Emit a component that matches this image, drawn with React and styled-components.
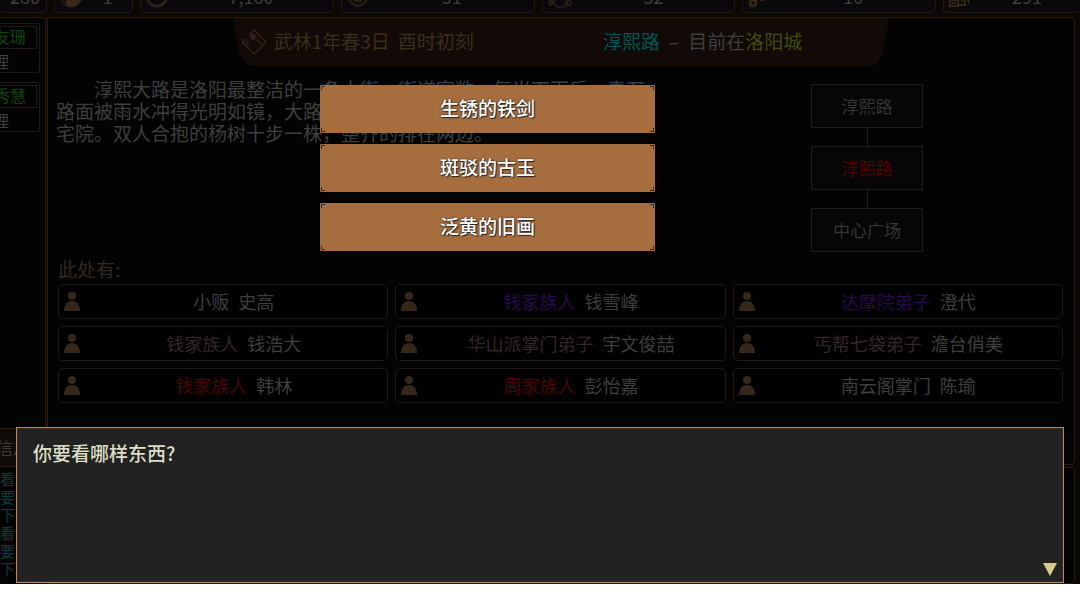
import React from 'react'
import styled, { createGlobalStyle } from 'styled-components'

const GlobalStyle = createGlobalStyle`
  * {
    box-sizing: border-box;
  }
  body {
    margin: 0;
    background: #ffffff;
    font-family: "Noto Sans CJK SC", sans-serif;
  }
  button {
    font-family: inherit;
    margin: 0;
    padding: 0;
    cursor: pointer;
  }
`;

const Stage = styled.div`
  position: relative;
  overflow: hidden;
  background: #0a0705;
  color: #3e3e3e;
`;

const StatBar = styled.header`
  display: grid;
  grid-template-columns: 47px 79px repeat(4, 194fr) 137fr;
  gap: 7px;
  align-content: end;
  height: 13px;
  overflow: hidden;
`;

const Stat = styled.div`
  display: flex;
  align-items: center;
  height: 34px;
  padding-left: 4px;
  background: #0a080a;
  border: 1px solid #21170d;
  border-left-width: ${(props) => (props.$cut ? '0' : '1px')};
  border-right-width: ${(props) => (props.$open ? '0' : '1px')};
  border-radius: 4px;
  font-size: 18px;
  line-height: 20px;
`;

const StatValue = styled.span`
  flex: 1;
  text-align: center;
`;

const Columns = styled.div`
  display: grid;
  grid-template-columns: 46px 1fr;
  column-gap: 1px;
  padding: 4px 5px 0 0;
`;

const Side = styled.aside`
  display: flex;
  flex-direction: column;
  overflow: hidden;
`;

const SideList = styled.div`
  display: flex;
  flex-direction: column;
  gap: 9px;
  min-height: 411px;
  padding: 5px 5px 0 0;
  background: #030303;
  border: solid #2a1c0f;
  border-width: 1px 1px 0 0;
  border-radius: 0 4px 0 0;
`;

const SideCard = styled.div`
  height: 50px;
  padding: 2px 2px 0 0;
  border: solid #1c1a18;
  border-width: 1px 1px 1px 0;
  border-radius: 0 3px 3px 0;
`;

const SideName = styled.div`
  display: flex;
  justify-content: flex-end;
  padding: 0 10px 2px 0;
  border: solid #221a12;
  border-width: 1px 1px 1px 0;
  font-size: 16px;
  line-height: 19px;
  white-space: nowrap;
  color: #14430a;
`;

const SideRole = styled.div`
  display: flex;
  justify-content: flex-end;
  padding-right: 28px;
  font-size: 16px;
  line-height: 24px;
  white-space: nowrap;
`;

const SideTab = styled.div`
  display: flex;
  height: 39px;
  align-items: center;
  background: #0f0b09;
  border: solid #2a1a10;
  border-width: 1px 0;
  font-size: 17px;
  text-indent: -4px;
  white-space: nowrap;
`;

const Log = styled.div`
  padding: 3px 0 6px;
  background: #030303;
  color: #023c3e;
  font-size: 15px;
  line-height: 18px;
`;

const Main = styled.main`
  display: flex;
  flex-direction: column;
  gap: 2px;
`;

const Panel = styled.section`
  min-height: 448px;
  background: #030303;
  border: 1px solid #2a1c0f;
  border-radius: 0 4px 4px 0;
`;

const LowerPanel = styled.section`
  flex: 1;
  background: #030303;
  border: 1px solid #2a1a12;
  border-radius: 0 4px 4px 0;
`;

const Banner = styled.div`
  display: flex;
  align-items: center;
  width: 64%;
  height: 48px;
  margin: 0 auto;
  padding: 0 87px 0 8px;
  background: #120a07;
  clip-path: polygon(0 0, 100% 0, 99% 75%, 98% 97%, 97% 100%, 3% 100%, 2% 97%, 1% 75%);
  font-size: 19px;
  white-space: nowrap;
`;

const GameDate = styled.div`
  display: flex;
  gap: 8px;
  margin-left: 7px;
  padding-bottom: 4px;
  color: #3b2e1a;
`;

const Whereabouts = styled.div`
  display: flex;
  gap: 9px;
  margin-left: auto;
  padding-bottom: 4px;
`;

const RoomName = styled.span`
  color: #015456;
`;

const CityName = styled.span`
  color: #434c04;
`;

const Scene = styled.div`
  display: flex;
  padding-top: 12px;
`;

const Description = styled.p`
  flex: none;
  width: 612px;
  margin: 0;
  padding: 0 4px 0 8px;
  font-size: 19px;
  line-height: 22px;
  text-indent: 2em;
`;

const RoomMap = styled.nav`
  display: flex;
  flex: 1;
  flex-direction: column;
  align-items: center;
  padding-top: 6px;
`;

const Room = styled.button`
  width: 112px;
  height: 44px;
  padding-bottom: 2px;
  background: #060606;
  border: 1px solid #1d1d1b;
  color: ${(props) => (props.$here ? '#520000' : '#343434')};
  font-size: 17px;
`;

const Path = styled.div`
  width: 1px;
  height: 18px;
  background: #261e12;
`;

const People = styled.div`
  padding: 6px 11px 24px 10px;
`;

const PeopleTitle = styled.h2`
  margin: 0 0 4px;
  color: #33281a;
  font-size: 19px;
  font-weight: 400;
  line-height: 22px;
`;

const PeopleGrid = styled.div`
  display: grid;
  grid-template-columns: repeat(3, 1fr);
  gap: 7px;
`;

const Person = styled.button`
  display: flex;
  align-items: center;
  height: 35px;
  padding-left: 5px;
  background: #000000;
  border: 1px solid #211a13;
  border-radius: 5px;
  color: #3e3e3e;
  font-size: 18px;
`;

const PersonLabel = styled.span`
  display: flex;
  flex: 1;
  justify-content: center;
  gap: 9px;
  padding-bottom: 2px;
  white-space: nowrap;
`;

const rankColors = {
  plain: '#3e3e3e',
  mauve: '#35252b',
  purple: '#260b4c',
  red: '#4a0202',
};

const Rank = styled.span`
  color: ${(props) => rankColors[props.$tone]};
`;

const Choices = styled.div`
  position: absolute;
  top: 0;
  left: 0;
  right: 0;
  display: flex;
  flex-direction: column;
  align-items: center;
  gap: 11px;
  padding: 85px 105px 0 0;
`;

const Choice = styled.button`
  position: relative;
  width: 335px;
  height: 48px;
  padding-bottom: 3px;
  background: #a66e3f;
  border: none;
  border-radius: 1px;
  color: #ffffff;
  font-size: 19px;
  font-weight: 500;
  text-shadow: 0 0 2px #1c1c1c, 1px 1px 1px #2a2a2a;
`;

const Corners = styled.svg`
  position: absolute;
  inset: 0;
  width: 100%;
  height: 100%;
  stroke: #3a2818;
  fill: none;
`;

const Dialog = styled.section`
  position: absolute;
  left: 16px;
  right: 16px;
  bottom: 1px;
  height: 156px;
  padding: 13px 16px;
  background: #222222;
  border: 1px solid #b08a68;
  box-shadow: inset 0 0 0 1px #3e2a1a;
  color: #dcdec6;
`;

const DialogText = styled.p`
  margin: 0;
  font-size: 19px;
  font-weight: 500;
  line-height: 24px;
`;

const NextButton = styled.button`
  position: absolute;
  right: 6px;
  bottom: 6px;
  display: flex;
  background: none;
  border: none;
`;

const people = [
  { rank: '小贩', name: '史高', tone: 'plain' },
  { rank: '钱家族人', name: '钱雪峰', tone: 'purple' },
  { rank: '达摩院弟子', name: '澄代', tone: 'purple' },
  { rank: '钱家族人', name: '钱浩大', tone: 'mauve' },
  { rank: '华山派掌门弟子', name: '宇文俊喆', tone: 'mauve' },
  { rank: '丐帮七袋弟子', name: '澹台俏美', tone: 'mauve' },
  { rank: '钱家族人', name: '韩林', tone: 'red' },
  { rank: '周家族人', name: '彭怡嘉', tone: 'red' },
  { rank: '南云阁掌门', name: '陈瑜', tone: 'plain' },
];

const logLines = ['看', '要', '下', '看', '要', '下'];

const choices = ['生锈的铁剑', '斑驳的古玉', '泛黄的旧画'];

const PersonIcon = () => (
  <svg width="16" height="20" viewBox="0 0 16 20" fill="#35281a">
    <circle cx="8" cy="4" r="4" />
    <path d="M0 19C0 13 3 9 8 9s8 4 8 10z" />
  </svg>
)

const CompassIcon = () => (
  <svg width="26" height="28" viewBox="0 0 26 28" fill="none" stroke="#30221a" strokeWidth="1.5">
    <path d="M8 7l5-5 12 12-12 12L1 14" />
    <path d="M2 11c0 4 2 6 5 7M5 10c0 3 1 5 3 6M15 11l6 6" />
    <circle cx="12" cy="9" r="3" fill="#30221a" stroke="none" />
  </svg>
)

const YinYangIcon = () => (
  <svg width="24" height="24" viewBox="0 0 24 24">
    <circle cx="12" cy="12" r="11" fill="#19110b" stroke="#2b2016" />
    <path d="M12 1a11 11 0 0 1 0 22c-6 0-7-5-3-8 3-2 5-2 3-5-3-3-3-8 0-9z" fill="#3a2816" />
  </svg>
)

const RingIcon = () => (
  <svg width="24" height="24" viewBox="0 0 24 24" fill="none" stroke="#2b2118">
    <circle cx="12" cy="12" r="10" strokeWidth="3" />
  </svg>
)

const ShieldIcon = () => (
  <svg width="24" height="24" viewBox="0 0 24 24" fill="none" stroke="#2b2118" strokeWidth="2">
    <path d="M2 12c1 6 5 9 10 10 5-1 9-4 10-10M8 17h8" />
  </svg>
)

const FlowerIcon = () => (
  <svg width="26" height="26" viewBox="0 0 26 26" fill="none" stroke="#2b2118" strokeWidth="1.5">
    <path d="M7 16c0 8 3 9 8 8s4-4 4-9M2 22l3-2M3 17l3 2M21 17l3-2M20 23l4-1" />
    <circle cx="4" cy="20" r="2" />
    <circle cx="22" cy="20" r="2" />
  </svg>
)

const KeyIcon = () => (
  <svg width="24" height="26" viewBox="0 0 24 26" fill="none" stroke="#332716" strokeWidth="3">
    <circle cx="6" cy="20" r="3" />
    <path d="M9 17L20 7M13 16l4 1" />
  </svg>
)

const CartIcon = () => (
  <svg width="26" height="26" viewBox="0 0 26 26" fill="none" stroke="#332716" strokeWidth="2">
    <path d="M2 17h8v6H2zM4 20h4M11 15h6v7h-6M19 13l2 7M22 14l3 2M13 18l8-4" />
  </svg>
)

const ChoiceCorners = () => (
  <Corners viewBox="0 0 335 48" preserveAspectRatio="none" aria-hidden="true">
    <path d="M1.5 5V1.5H5M330 1.5h3.500V5M1.5 43v3.500H5M330 46.500h3.500V43" />
  </Corners>
)

const App = () => {
  return (
    <>
      <GlobalStyle />
      <Stage>
        <StatBar>
          <Stat $cut><StatValue>280</StatValue></Stat>
          <Stat><YinYangIcon /><StatValue>1</StatValue></Stat>
          <Stat><RingIcon /><StatValue>7,160</StatValue></Stat>
          <Stat><ShieldIcon /><StatValue>51</StatValue></Stat>
          <Stat><FlowerIcon /><StatValue>52</StatValue></Stat>
          <Stat><KeyIcon /><StatValue>10</StatValue></Stat>
          <Stat $open><CartIcon /><StatValue>291</StatValue></Stat>
        </StatBar>

        <Columns>
          <Side>
            <SideList>
              <SideCard>
                <SideName>友珊</SideName>
                <SideRole>理</SideRole>
              </SideCard>
              <SideCard>
                <SideName>秀慧</SideName>
                <SideRole>理</SideRole>
              </SideCard>
            </SideList>
            <SideTab>信息</SideTab>
            <Log>
              {logLines.map((line, index) => (
                <div key={index}>{line}</div>
              ))}
            </Log>
          </Side>

          <Main>
            <Panel>
              <Banner>
                <CompassIcon />
                <GameDate>
                  <span>武林1年春3日</span>
                  <span>酉时初刻</span>
                </GameDate>
                <Whereabouts>
                  <RoomName>淳熙路</RoomName>
                  <span>–</span>
                  <span>目前在<CityName>洛阳城</CityName></span>
                </Whereabouts>
              </Banner>

              <Scene>
                <Description>
                  淳熙大路是洛阳最整洁的一条大街，街道宽敞，每当下雨后，青石路面被雨水冲得光明如镜，大路两旁都是大户人家的高墙深院和豪门的宅院。双人合抱的杨树十步一株，整齐的排在两边。
                </Description>
                <RoomMap>
                  <Room>淳熙路</Room>
                  <Path />
                  <Room $here>淳熙路</Room>
                  <Path />
                  <Room>中心广场</Room>
                </RoomMap>
              </Scene>

              <People>
                <PeopleTitle>此处有:</PeopleTitle>
                <PeopleGrid>
                  {people.map((person) => (
                    <Person key={person.name}>
                      <PersonIcon />
                      <PersonLabel>
                        <Rank $tone={person.tone}>{person.rank}</Rank>
                        <span>{person.name}</span>
                      </PersonLabel>
                    </Person>
                  ))}
                </PeopleGrid>
              </People>
            </Panel>
            <LowerPanel />
          </Main>
        </Columns>

        <Choices>
          {choices.map((choice) => (
            <Choice key={choice}>
              <ChoiceCorners />
              {choice}
            </Choice>
          ))}
        </Choices>

        <Dialog role="dialog" aria-label="对话">
          <DialogText>你要看哪样东西?</DialogText>
          <NextButton aria-label="继续">
            <svg width="14" height="13" viewBox="0 0 14 13">
              <path d="M0 0h14L7 13z" fill="#dcc98c" />
            </svg>
          </NextButton>
        </Dialog>
      </Stage>
    </>
  )
}

export default App
